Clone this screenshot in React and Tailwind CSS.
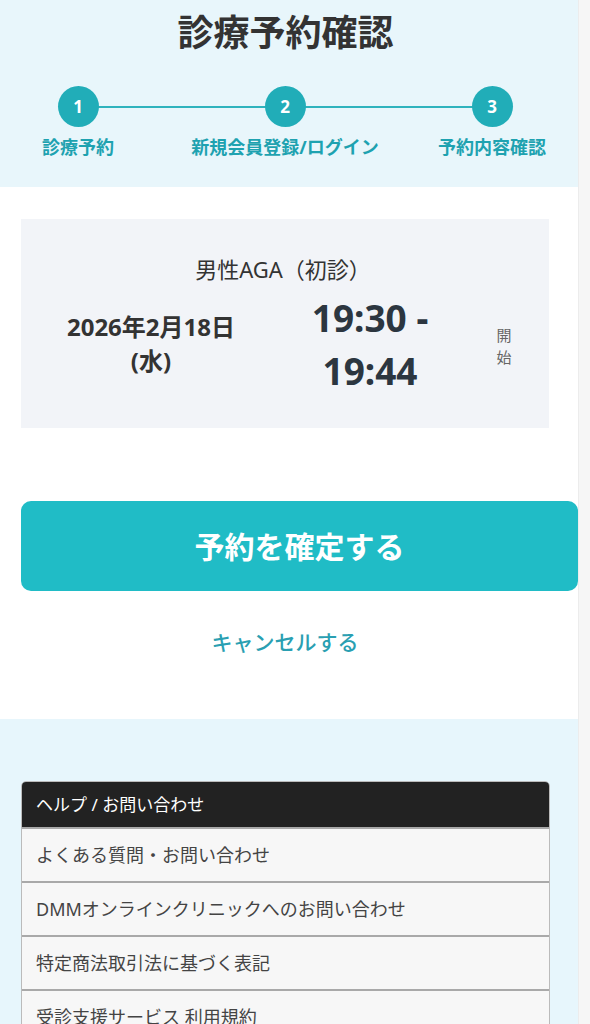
import React from "react";

const steps = [
  { num: 1, label: "診療予約" },
  { num: 2, label: "新規会員登録/ログイン" },
  { num: 3, label: "予約内容確認" },
];

const helpLinks = [
  "よくある質問・お問い合わせ",
  "DMMオンラインクリニックへのお問い合わせ",
  "特定商法取引法に基づく表記",
  "受診支援サービス 利用規約",
];

const font = { fontFamily: '"Noto Sans", "Noto Sans CJK JP", sans-serif' };

export default function App() {
  return (
    <div className="flex w-[590px] min-h-screen bg-white" style={font}>
      <main className="w-[578px] flex flex-col">
        {/* Header + stepper */}
        <section className="bg-[#e8f6fb] h-[187px] pt-[11px]">
          <h1 className="text-center text-[36px] leading-[44px] font-bold text-[#333] pr-[7px]">
            診療予約確認
          </h1>
          <div className="relative mt-[31px] flex gap-[87px] px-[18px]">
            {/* connecting line */}
            <div className="absolute left-[78px] right-[86px] top-[20px] h-[2px] bg-[#2fb3bd]" />
            {steps.map((s) => (
              <div key={s.num} className="relative w-[120px] flex flex-col items-center">
                <div className="w-[41px] h-[41px] rounded-full bg-[#21adb8] flex items-center justify-center text-white font-bold text-[17px]">
                  {s.num}
                </div>
                <div className="mt-[8px] whitespace-nowrap text-[18px] leading-[24px] font-bold text-[#1ea2b0]">
                  {s.label}
                </div>
              </div>
            ))}
          </div>
        </section>

        {/* Reservation details */}
        <section className="bg-white pt-[32px] pb-[63px]">
          <div className="ml-[21px] w-[528px] h-[209px] bg-[#f2f4f8] pt-[35px]">
            <div className="text-center text-[22px] leading-[30px] text-[#333] pr-[4px]">
              男性AGA（初診）
            </div>
            <div className="mt-[7px] grid grid-cols-[260px_178px_90px] items-center">
              <div className="text-center text-[24px] leading-[34px] font-bold text-[#333]">
                2026年2月18日
                <br />
                (水)
              </div>
              <div className="text-center text-[37px] leading-[53px] font-bold text-[#2c3640]">
                19:30 -
                <br />
                19:44
              </div>
              <div className="text-center text-[15px] leading-[22px] text-[#666] pt-[4px]">
                開
                <br />
                始
              </div>
            </div>
          </div>

          <button className="mt-[73px] ml-[21px] w-[557px] h-[90px] rounded-[10px] bg-[#20bcc6] text-white text-[30px] font-bold flex items-center justify-center">
            予約を確定する
          </button>

          <div className="mt-[37px] text-center text-[21px] leading-[28px] font-medium text-[#2a9fb2] pr-[8px]">
            キャンセルする
          </div>
        </section>

        {/* Help */}
        <section className="flex-1 bg-[#e7f6fc] pt-[62px] pb-[40px]">
          <div className="ml-[21px] w-[529px] rounded-[5px] overflow-hidden border border-[#bbb]">
            <div className="bg-[#222] h-[45px] flex items-center px-[14px] text-white text-[17px]">
              ヘルプ / お問い合わせ
            </div>
            {helpLinks.map((t) => (
              <div
                key={t}
                className="h-[54px] flex items-center px-[14px] bg-[#f7f7f7] border-t-2 border-[#a9a9a9] text-[18px] text-[#444]"
              >
                {t}
              </div>
            ))}
          </div>
        </section>
      </main>
      <div className="flex-1 bg-[#f6f6f6] border-l border-[#ececec]" />
    </div>
  );
}
